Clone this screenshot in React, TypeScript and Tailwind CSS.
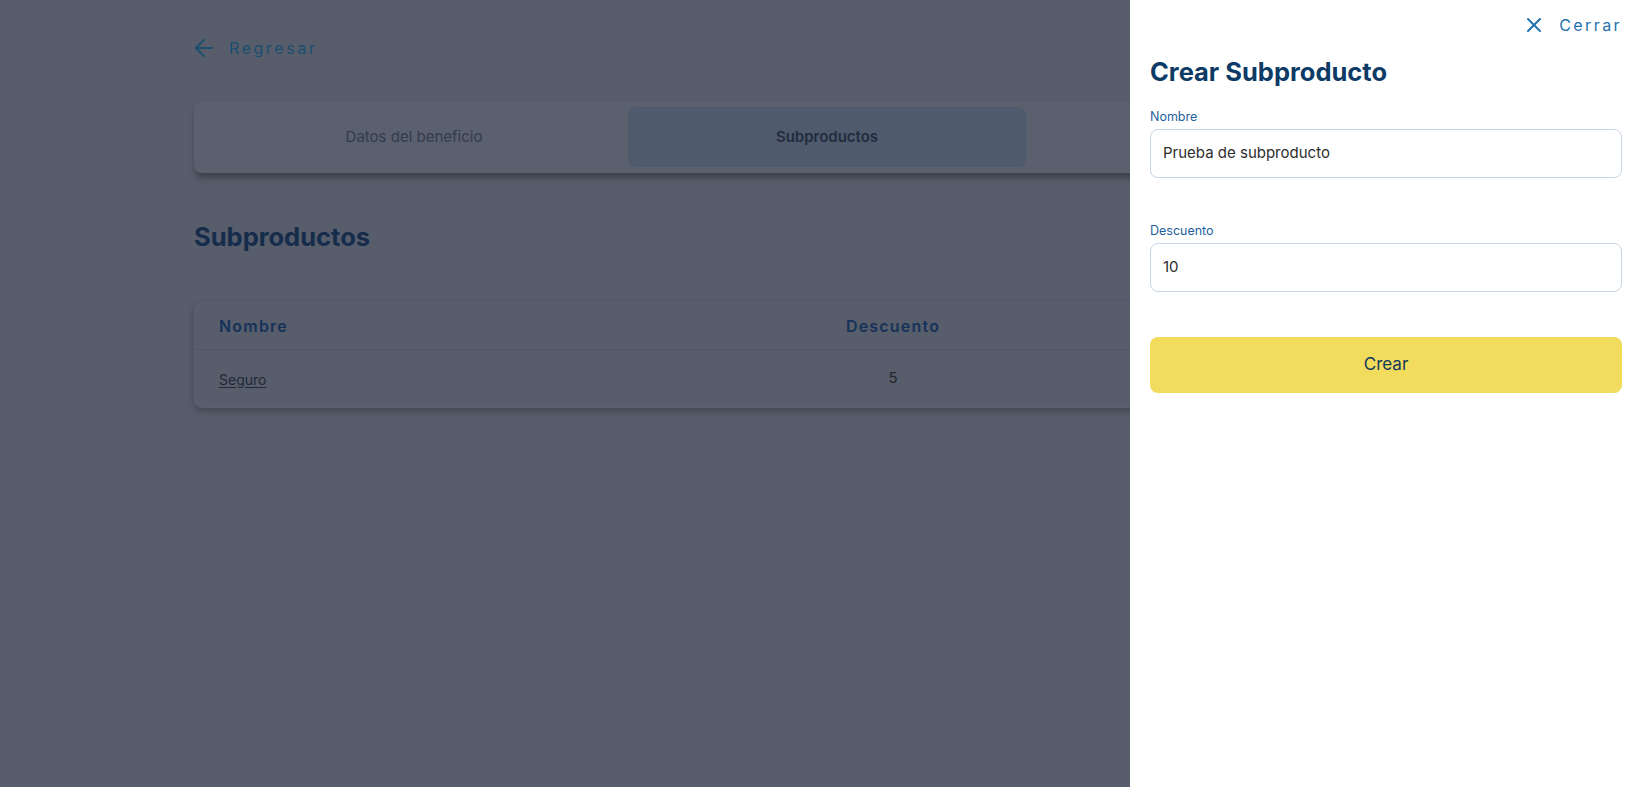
import { ArrowLeft, X } from 'lucide-react';

const font = { fontFamily: 'Inter, "Noto Sans", sans-serif' };

// Dimmed page behind the drawer
function BackgroundPage() {
  return (
    <div className="min-h-screen w-full bg-[#575d6b] pl-[194px] pt-[34px]">
      <button className="flex items-center gap-[11px] text-[#1b4f6f] -ml-[4px]">
        <ArrowLeft className="w-[28px] h-[28px]" strokeWidth={1.7} />
        <span className="text-[16px] leading-6 tracking-[2.6px]">Regresar</span>
      </button>

      {/* Tabs */}
      <div className="mt-[40px] w-[1266px] rounded-lg bg-[#5a606d] px-[21px] pt-[5px] pb-[6px] shadow-[0_6px_6px_-1px_rgba(40,44,54,0.55)]">
        <div className="grid grid-cols-3 gap-[15px]">
          <div className="h-[60px] flex items-center justify-center text-[15px] text-[#323c4e]">
            Datos del beneficio
          </div>
          <div className="h-[60px] flex items-center justify-center rounded-lg bg-[#4f5a6c] text-[15px] font-semibold text-[#222c3e]">
            Subproductos
          </div>
          <div className="h-[60px] flex items-center justify-center text-[15px] text-[#323c4e]">
            Beneficiarios
          </div>
        </div>
      </div>

      <h2 className="mt-[48px] text-[25.5px] leading-8 font-bold text-[#162c4b]">Subproductos</h2>

      {/* Table */}
      <div className="mt-[49px] w-[1266px] rounded-lg border border-[#5b6170] bg-[#575d6b] shadow-[0_3px_6px_rgba(40,44,54,0.45)]">
        <div className="grid grid-cols-[476px_396px_1fr] h-[47px] items-center border-b border-[#4e5361] px-6">
          <div className="text-[16px] font-semibold tracking-[1.2px] text-[#163259]">Nombre</div>
          <div className="text-center text-[16px] font-semibold tracking-[1.2px] text-[#163259]">Descuento</div>
          <div className="text-right text-[16px] font-semibold tracking-[1.2px] text-[#163259]">Acciones</div>
        </div>
        <div className="grid grid-cols-[476px_396px_1fr] h-[57px] items-center px-6">
          <div>
            <span className="text-[14px] underline underline-offset-2 text-[#222a38]">Seguro</span>
          </div>
          <div className="text-center text-[15px] text-[#23262d]">5</div>
          <div />
        </div>
      </div>
    </div>
  );
}

function Field({ label, value }: { label: string; value: string }) {
  return (
    <div>
      <label className="block text-[12.5px] leading-[18px] text-[#1f5f9e]">{label}</label>
      <div className="mt-[3px] h-[49px] rounded-lg border border-[#c8d4e4] flex items-center px-3 text-[15px] text-[#2d2d2d]">
        {value}
      </div>
    </div>
  );
}

function Drawer() {
  return (
    <aside className="absolute top-0 right-0 h-full w-[507px] bg-white pl-5 pr-[15px]">
      <div className="flex justify-end pt-[13px]">
        <button className="flex items-center gap-[13px] text-[#2272ad]">
          <X className="w-[24px] h-[24px]" strokeWidth={2} />
          <span className="text-[16px] leading-6 tracking-[2.4px]">Cerrar</span>
        </button>
      </div>

      <h1 className="mt-[19px] text-[25.5px] leading-8 font-bold text-[#0d3b66]">Crear Subproducto</h1>

      <div className="mt-[20px]">
        <Field label="Nombre" value="Prueba de subproducto" />
      </div>
      <div className="mt-[44px]">
        <Field label="Descuento" value="10" />
      </div>

      <button className="mt-[45px] w-full h-[56px] rounded-lg bg-[#f2dc5e] text-[17px] text-[#10395c]">
        Crear
      </button>
    </aside>
  );
}

export default function App() {
  return (
    <div className="relative h-screen w-full overflow-hidden" style={font}>
      <BackgroundPage />
      <Drawer />
    </div>
  );
}
